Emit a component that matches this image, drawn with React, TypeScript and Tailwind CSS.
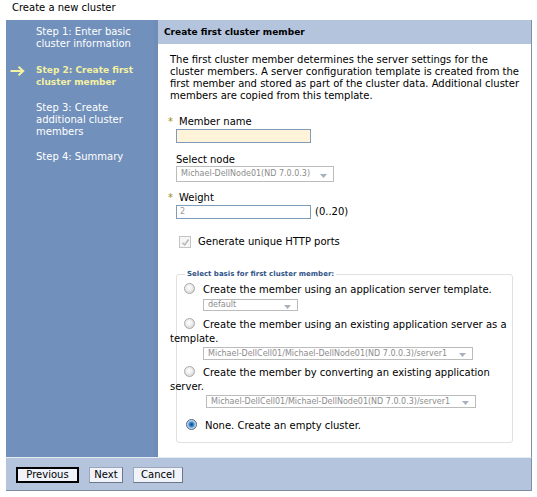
import { FC, ReactNode } from "react";

const Radio: FC<{ checked?: boolean }> = ({ checked }) =>
  checked ? (
    <span className="mr-[8px] inline-block h-[11px] w-[11px] rounded-full border border-[#50607a] bg-[radial-gradient(circle,#0d4a8f_0,#2d7ac4_30%,#9cc4e8_55%,#f4f8fc_80%)] align-[-1px]" />
  ) : (
    <span className="mr-[8px] inline-block h-[11px] w-[11px] rounded-full border border-[#a9a9a9] bg-[radial-gradient(circle_at_45%_40%,#ffffff_0,#f2f2f2_35%,#c9c9c9_100%)] align-[-1px]" />
  );

const FakeSelect: FC<{ width: string; height: string; children: ReactNode; className?: string }> = ({
  width,
  height,
  children,
  className,
}) => (
  <div
    className={`flex items-center justify-between border border-[#bcbcbc] bg-white pl-[4px] pr-[6px] text-[8px] leading-none text-[#8c8c8c] ${width} ${height} ${className ?? ""}`}
  >
    <span className="whitespace-nowrap">{children}</span>
    <svg width="7" height="4" viewBox="0 0 7 4" className="mt-[3px]">
      <path d="M0 0 L7 0 L3.5 4 Z" fill="#a8b0bc" />
    </svg>
  </div>
);

const Star = () => <span className="inline-block w-[12px] pl-[1px] text-[#9a8a1c]">*</span>;

const Button: FC<{ children: ReactNode; width: string; primary?: boolean }> = ({ children, width, primary }) => (
  <button
    className={`flex h-[16px] items-center justify-center bg-[#f0f3fa] text-[10px] leading-none text-black ${width} ${
      primary ? "border-2 border-black" : "border border-[#9ba6b8] border-b-[#6c768a] border-r-[#6c768a]"
    }`}
  >
    {children}
  </button>
);

export default function App() {
  return (
    <div className="h-[497px] w-[537px] bg-white font-['DejaVu_Sans',sans-serif] text-[10px] leading-[12px] text-black">
      <div className="h-[20px] pl-[12px] pt-[2px]">Create a new cluster</div>

      <div className="ml-[6px] w-[526px]">
        <div className="flex h-[437px]">
          {/* wizard steps */}
          <div className="w-[152px] border-r-[4px] border-[#6e8db7] bg-[#7190bb] pl-[30px] pt-[6px] text-white">
            <div>
              Step 1: Enter basic
              <br />
              cluster information
            </div>
            <div className="relative mt-[14px] text-[9px] font-bold text-[#f4f1a2]">
              <svg
                width="15"
                height="10"
                viewBox="0 0 15 10"
                className="absolute left-[-26px] top-[2px]"
              >
                <path d="M0.5 5 H13 M8.5 0.8 L13.2 5 L8.5 9.2" stroke="#f4f1a2" strokeWidth="2" fill="none" />
              </svg>
              Step 2: Create first
              <br />
              cluster member
            </div>
            <div className="mt-[14px]">
              Step 3: Create
              <br />
              additional cluster
              <br />
              members
            </div>
            <div className="mt-[13px]">Step 4: Summary</div>
          </div>

          {/* panel */}
          <div className="flex-1 border-r border-[#7d8fae]">
            <div className="flex h-[24px] items-center bg-[#b4c4dd] pl-[6px] text-[9px] font-bold">
              Create first cluster member
            </div>

            <div className="pl-[12px] pt-[10px]">
              <p>
                The first cluster member determines the server settings for the
                <br />
                cluster members. A server configuration template is created from the
                <br />
                first member and stored as part of the cluster data. Additional cluster
                <br />
                members are copied from this template.
              </p>

              <div className="ml-[6px]">
                <div className="-ml-[9px] mt-[14px]">
                  <Star />
                  Member name
                </div>
                <div className="mt-[1px] h-[14px] w-[135px] border border-[#7f9db9] bg-[#fff4da]" />

                <div className="mt-[11px]">Select node</div>
                <FakeSelect width="w-[158px]" height="h-[16px]">
                  Michael-DellNode01(ND 7.0.0.3)
                </FakeSelect>

                <div className="-ml-[9px] mt-[10px]">
                  <Star />
                  Weight
                </div>
                <div className="mt-[1px] flex items-center gap-[4px]">
                  <div className="flex h-[14px] w-[135px] items-center border border-[#7f9db9] bg-white pl-[3px] text-[8px] text-[#9a9a9a]">
                    2
                  </div>
                  <span>(0..20)</span>
                </div>

                <div className="mt-[16px] flex h-[14px] items-center">
                  <span className="ml-[3px] mr-[7px] flex h-[12px] w-[12px] items-center justify-center border border-[#c4c4c4] bg-[#f6f6f6]">
                    <svg width="9" height="9" viewBox="0 0 9 9">
                      <path d="M1.5 4.8 L3.6 7 L7.6 1.5" stroke="#b4b4b4" strokeWidth="1.4" fill="none" />
                    </svg>
                  </span>
                  Generate unique HTTP ports
                </div>

                <fieldset className="mt-[20px] h-[174px] w-[337px] rounded-[3px] border border-[#e0e0e0]">
                  <legend className="ml-[8px] px-[2px] text-[7px] font-bold leading-[10px] text-[#2f5287]">
                    Select basis for first cluster member:
                  </legend>

                  <div className="-ml-[7px] mt-[4px] indent-[14px] leading-[14px]">
                    <Radio />
                    Create the member using an application server template.
                  </div>
                  <FakeSelect width="w-[95px]" height="h-[12px]" className="ml-[26px] mt-[2px]">
                    default
                  </FakeSelect>

                  <div className="-ml-[7px] mt-[7px] indent-[14px] leading-[14px]">
                    <Radio />
                    Create the member using an existing application server as a
                    <br />
                    template.
                  </div>
                  <FakeSelect width="w-[270px]" height="h-[13px]" className="ml-[26px] mt-[1px]">
                    Michael-DellCell01/Michael-DellNode01(ND 7.0.0.3)/server1
                  </FakeSelect>

                  <div className="-ml-[7px] mt-[6px] indent-[14px] leading-[14px]">
                    <Radio />
                    Create the member by converting an existing application
                    <br />
                    server.
                  </div>
                  <FakeSelect width="w-[270px]" height="h-[13px]" className="ml-[29px] mt-[1px]">
                    Michael-DellCell01/Michael-DellNode01(ND 7.0.0.3)/server1
                  </FakeSelect>

                  <div className="-ml-[7px] mt-[11px] indent-[16px] leading-[14px]">
                    <Radio checked />
                    None. Create an empty cluster.
                  </div>
                </fieldset>
              </div>
            </div>
          </div>
        </div>

        {/* footer */}
        <div className="flex h-[34px] gap-[10px] border-b border-r border-t border-b-[#7f8ca4] border-r-[#7d8fae] border-t-[#e6ebf3] bg-[#b4c4dd] pl-[10px] pt-[9px]">
          <Button width="w-[63px]" primary>
            Previous
          </Button>
          <Button width="w-[34px]">Next</Button>
          <Button width="w-[50px]">Cancel</Button>
        </div>
      </div>
    </div>
  );
}
